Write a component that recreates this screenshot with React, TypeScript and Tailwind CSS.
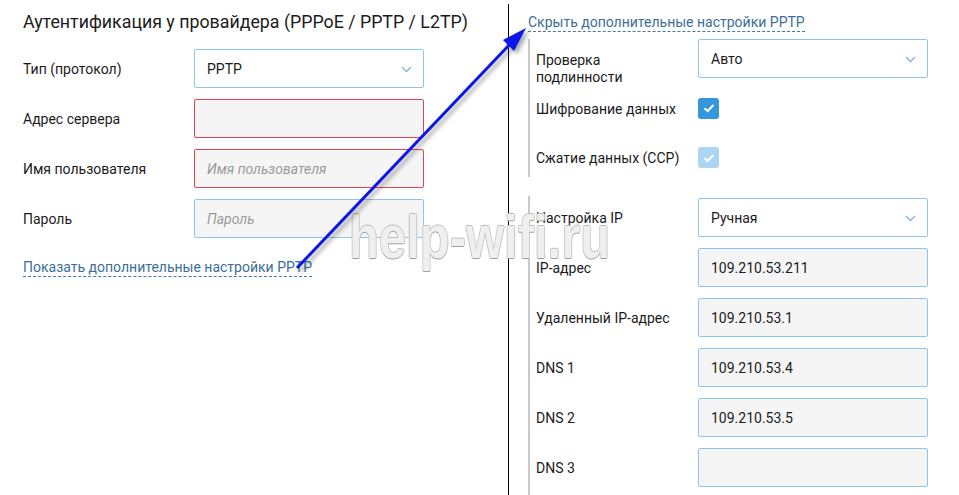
import type { ReactNode } from 'react';

const font = { fontFamily: 'Roboto, "Liberation Sans", sans-serif' };

function Chevron() {
  return (
    <svg width="11" height="7" viewBox="0 0 11 7" className="absolute right-[11px] top-[16px]">
      <path d="M1 1 5.5 5.5 10 1" fill="none" stroke="#7db3dd" strokeWidth="1.3" />
    </svg>
  );
}

function Select({ value }: { value: string }) {
  return (
    <div className="relative flex h-[39px] w-[230px] items-center rounded-[2px] border border-[#8ec5ec] bg-white pl-[12px] pt-[1px] text-[14px] text-[#1b1b1b]">
      {value}
      <Chevron />
    </div>
  );
}

function Field({ value, placeholder, error }: { value?: string; placeholder?: string; error?: boolean }) {
  return (
    <div
      className={
        'flex h-[39px] w-[230px] items-center rounded-[2px] border bg-[#f5f5f5] pl-[12px] pt-[1px] text-[14px] ' +
        (error ? 'border-[#e84157]' : 'border-[#8ec5ec]')
      }
    >
      {value ? (
        <span className="text-[#1b1b1b]">{value}</span>
      ) : placeholder ? (
        <span className="italic text-[#9a9a9a]">{placeholder}</span>
      ) : null}
    </div>
  );
}

function Check({ disabled }: { disabled?: boolean }) {
  return (
    <div
      className={
        'flex h-[21px] w-[21px] items-center justify-center rounded-[3px] ' +
        (disabled ? 'bg-[#abd5f3]' : 'bg-[#3696dc]')
      }
    >
      <svg width="12" height="10" viewBox="0 0 12 10">
        <path d="M1.5 5.2 4.6 8 10.5 2" fill="none" stroke="#fff" strokeWidth="2" />
      </svg>
    </div>
  );
}

function Row({ label, children, labelWidth }: { label: ReactNode; children: ReactNode; labelWidth: string }) {
  return (
    <div className="flex h-[39px] items-center">
      <div className={labelWidth + ' pt-[2px] text-[14px] leading-[17px] text-[#1b1b1b]'}>{label}</div>
      {children}
    </div>
  );
}

function DashLink({ children }: { children: ReactNode }) {
  return (
    <span className="border-b border-dashed border-[#3f7aa6] pb-[1px] text-[14px] leading-[17px] text-[#3a6f98]">
      {children}
    </span>
  );
}

export default function App() {
  return (
    <div className="relative flex h-[495px] w-[959px] overflow-hidden bg-white" style={font}>
      {/* left: main auth form */}
      <div className="flex w-[508px] shrink-0 flex-col pl-[23px]">
        <h2 className="mt-[10px] whitespace-nowrap text-[17.8px] leading-[24px] text-[#1b1b1b]">
          Аутентификация у провайдера (PPPoE / PPTP / L2TP)
        </h2>
        <div className="mt-[15px] flex flex-col gap-[11px]">
          <Row label="Тип (протокол)" labelWidth="w-[171px]">
            <Select value="PPTP" />
          </Row>
          <Row label="Адрес сервера" labelWidth="w-[171px]">
            <Field error />
          </Row>
          <Row label="Имя пользователя" labelWidth="w-[171px]">
            <Field error placeholder="Имя пользователя" />
          </Row>
          <Row label="Пароль" labelWidth="w-[171px]">
            <Field placeholder="Пароль" />
          </Row>
        </div>
        <div className="mt-[17px]">
          <DashLink>Показать дополнительные настройки PPTP</DashLink>
        </div>
      </div>

      {/* right: extra settings */}
      <div className="mt-[4px] flex flex-1 flex-col border-l border-black pl-[19px]">
        <div className="h-[35px] pt-[6px]">
          <DashLink>Скрыть дополнительные настройки PPTP</DashLink>
        </div>
        <div className="flex h-[138px] flex-col border-l-2 border-[#c8c8cd] pl-[6px]">
          <div className="flex h-[39px] items-start">
            <div className="w-[162px] pt-[13px] text-[14px] leading-[17px] text-[#1b1b1b]">
              Проверка
              <br />
              подлинности
            </div>
            <Select value="Авто" />
          </div>
          <div className="mt-[11px] flex h-[39px] items-center">
            <div className="w-[162px] pt-[2px] text-[14px] text-[#1b1b1b]">Шифрование данных</div>
            <Check />
          </div>
          <div className="mt-[11px] flex h-[39px] items-center">
            <div className="w-[162px] pt-[2px] text-[14px] text-[#1b1b1b]">Сжатие данных (CCP)</div>
            <Check disabled />
          </div>
        </div>
        <div className="mt-[19px] flex flex-1 flex-col gap-[11px] border-l-2 border-[#c8c8cd] pl-[6px] pt-[2px]">
          <Row label="Настройка IP" labelWidth="w-[162px]">
            <Select value="Ручная" />
          </Row>
          <Row label="IP-адрес" labelWidth="w-[162px]">
            <Field value="109.210.53.211" />
          </Row>
          <Row label="Удаленный IP-адрес" labelWidth="w-[162px]">
            <Field value="109.210.53.1" />
          </Row>
          <Row label="DNS 1" labelWidth="w-[162px]">
            <Field value="109.210.53.4" />
          </Row>
          <Row label="DNS 2" labelWidth="w-[162px]">
            <Field value="109.210.53.5" />
          </Row>
          <Row label="DNS 3" labelWidth="w-[162px]">
            <Field />
          </Row>
        </div>
      </div>

      {/* watermark */}
      <div
        className="pointer-events-none absolute left-[349px] top-[206px] origin-left scale-x-[0.79] text-[62px] font-bold leading-[62px] text-[#efefef] [text-shadow:0_1px_0_#a0a0a0,0_-1px_0_#bdbdbd,1px_0_0_#cccccc,-1px_0_0_#cccccc]"
        style={{ fontFamily: '"Liberation Sans", Arial, sans-serif' }}
      >
        help-wifi.ru
      </div>

      {/* annotation arrow */}
      <svg className="pointer-events-none absolute left-0 top-0" width="959" height="495" viewBox="0 0 959 495">
        <defs>
          <filter id="sh" x="-20%" y="-20%" width="140%" height="140%">
            <feDropShadow dx="3" dy="3" stdDeviation="2" floodColor="#000" floodOpacity="0.35" />
          </filter>
        </defs>
        <g filter="url(#sh)">
          <line x1="297" y1="268" x2="512" y2="42" stroke="#0a14e6" strokeWidth="3" />
          <polygon points="526,28 503,40 514,51" fill="#0a14e6" />
        </g>
      </svg>
    </div>
  );
}
